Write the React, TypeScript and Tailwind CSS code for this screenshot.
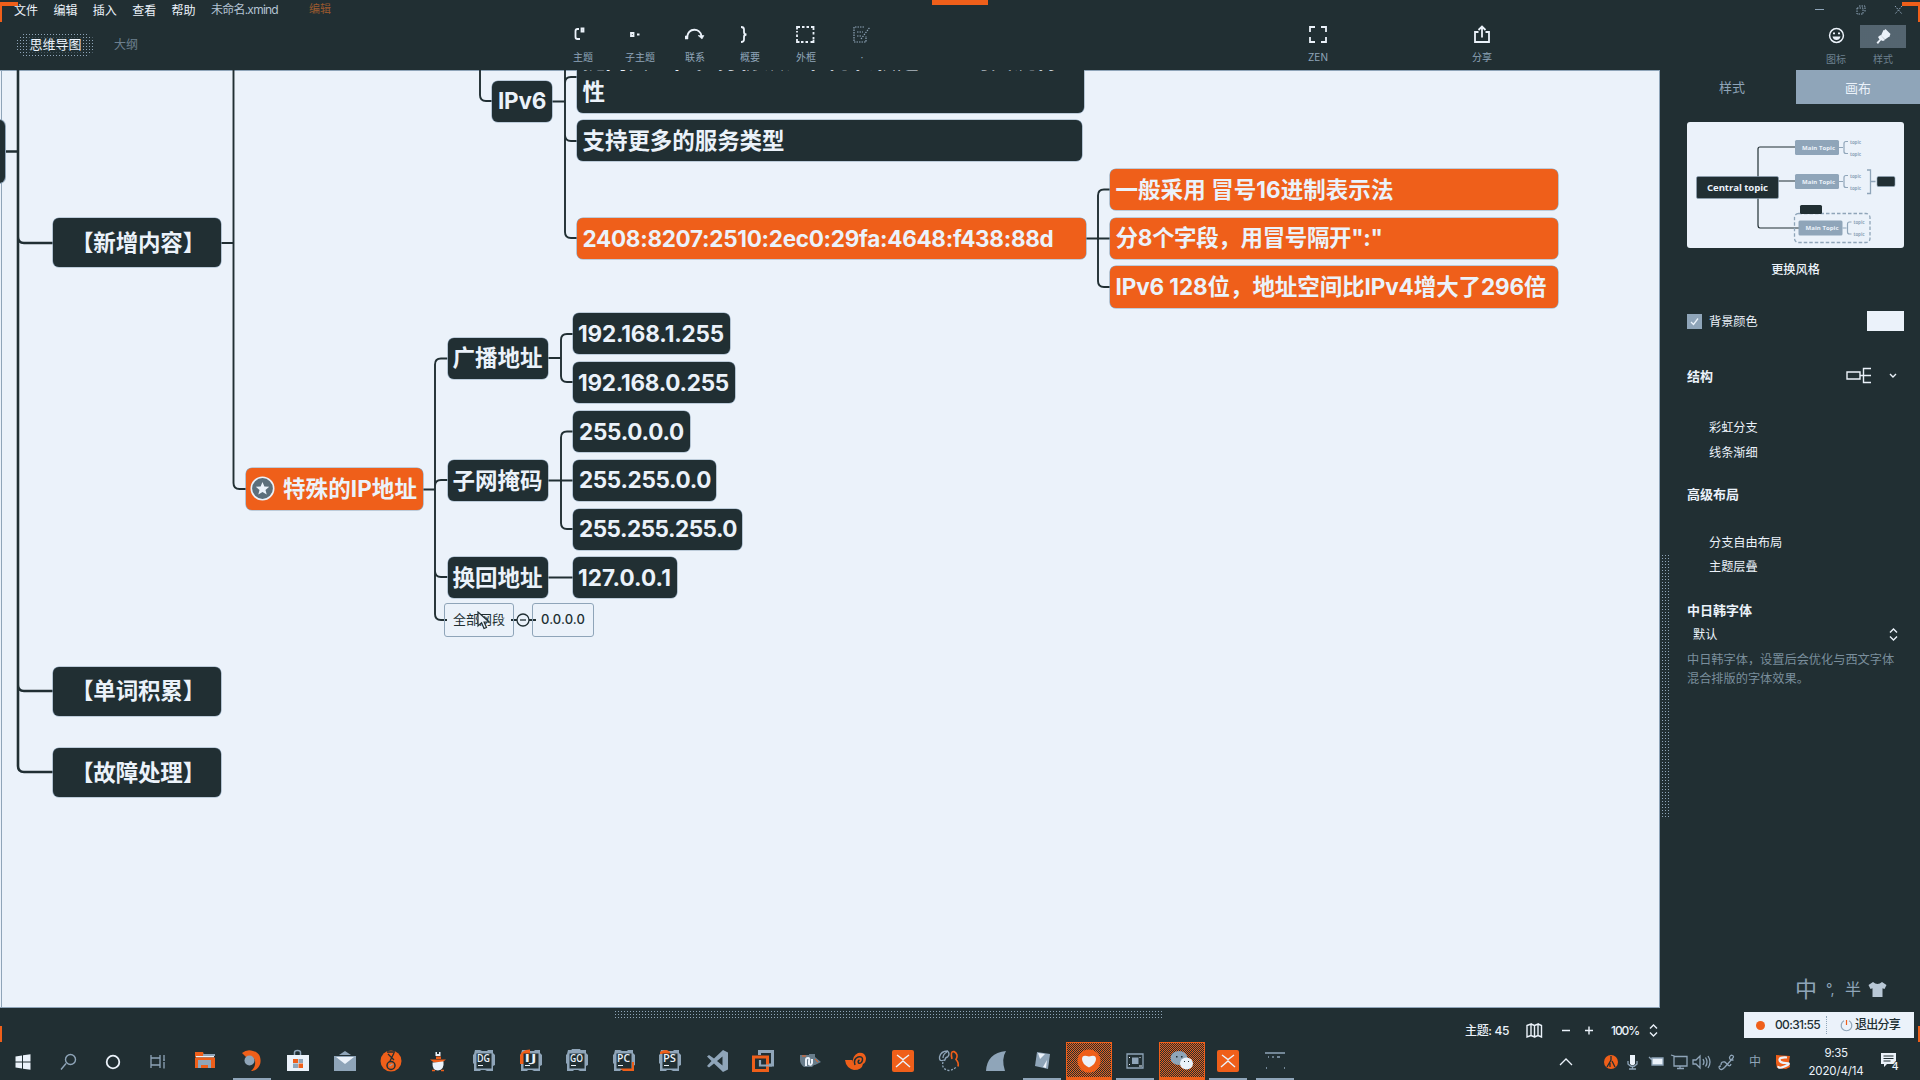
import { useLayoutEffect, useRef, useState, type ReactNode } from "react";

/** Text whose tracking is tuned so that it fills the given width. */
function Fit({ text, w, className = "" }: { text: string; w: number; className?: string }) {
  const ref = useRef<HTMLSpanElement>(null);
  const [gap, setGap] = useState(0);
  useLayoutEffect(() => {
    const el = ref.current;
    if (!el) return;
    el.style.letterSpacing = "0px";
    setGap((w - el.getBoundingClientRect().width) / text.length);
    el.style.letterSpacing = "";
  }, [text, w]);
  return (
    <span ref={ref} className={"inline-block whitespace-nowrap " + className} style={{ letterSpacing: gap + "px" }}>
      {text}
    </span>
  );
}

type TopicData = {
  x: number;
  y: number;
  w: number;
  h: number;
  text: string;
  tw: number;
  pad: number;
  orange?: boolean;
  star?: boolean;
};

const topics: TopicData[] = [
  { x: 53, y: 218, w: 168, h: 49, text: "【新增内容】", tw: 134, pad: 18 },
  { x: 53, y: 666.5, w: 168, h: 49, text: "【单词积累】", tw: 134, pad: 18 },
  { x: 53, y: 748, w: 168, h: 49, text: "【故障处理】", tw: 134, pad: 18 },
  { x: 492, y: 80.5, w: 60, h: 41, text: "IPv6", tw: 48, pad: 6 },
  { x: 577, y: 120, w: 505, h: 41, text: "支持更多的服务类型", tw: 202, pad: 5.5 },
  { x: 577, y: 218, w: 509, h: 41, text: "2408:8207:2510:2ec0:29fa:4648:f438:88d", tw: 471, pad: 5.5, orange: true },
  { x: 1110, y: 169, w: 448, h: 41, text: "一般采用 冒号16进制表示法", tw: 278, pad: 5.5, orange: true },
  { x: 1110, y: 217.5, w: 448, h: 41, text: '分8个字段，用冒号隔开":"', tw: 267, pad: 5.5, orange: true },
  { x: 1110, y: 266, w: 448, h: 41.5, text: "IPv6 128位，地址空间比IPv4增大了296倍", tw: 431, pad: 5.5, orange: true },
  { x: 246, y: 468, w: 177, h: 41.5, text: "特殊的IP地址", tw: 134, pad: 37, orange: true, star: true },
  { x: 447.5, y: 337.5, w: 100.5, h: 41, text: "广播地址", tw: 90, pad: 5 },
  { x: 447.5, y: 460, w: 100.5, h: 41, text: "子网掩码", tw: 90, pad: 5 },
  { x: 447.5, y: 557, w: 100.5, h: 41, text: "换回地址", tw: 90, pad: 5 },
  { x: 573, y: 313, w: 157, h: 41, text: "192.168.1.255", tw: 146, pad: 5 },
  { x: 573, y: 362, w: 162, h: 41, text: "192.168.0.255", tw: 151, pad: 5 },
  { x: 573, y: 411, w: 117, h: 41, text: "255.0.0.0", tw: 105, pad: 6 },
  { x: 573, y: 459.5, w: 143, h: 41, text: "255.255.0.0", tw: 132, pad: 6 },
  { x: 573, y: 508.5, w: 169, h: 41, text: "255.255.255.0", tw: 158, pad: 6 },
  { x: 573, y: 557, w: 104, h: 41, text: "127.0.0.1", tw: 93, pad: 5 },
];

function Topic({ t }: { t: TopicData }) {
  return (
    <div
      className={
        "absolute flex items-center rounded-[6px] pt-px text-[22.5px] leading-none font-bold text-[#ebf2fa] shadow-[0_0_0_0.6px_#8fa5b9] " +
        (t.orange ? "bg-[#ef5f1a]" : "bg-[#212f33]")
      }
      style={{ left: t.x, top: t.y - 70, width: t.w, height: t.h, paddingLeft: t.pad }}
    >
      {t.star && (
        <svg className="absolute left-1 top-2" width="25" height="25" viewBox="0 0 25 25">
          <circle cx="12.5" cy="12.5" r="11.2" fill="#5c6f7b" stroke="#ebf2fa" strokeWidth="1.6" />
          <path d="M12.5 6l1.9 4.4 4.8.4-3.7 3.1 1.2 4.7-4.2-2.6-4.2 2.6 1.2-4.7-3.7-3.1 4.8-.4z" fill="#ebf2fa" />
        </svg>
      )}
      <Fit text={t.text} w={t.tw} />
    </div>
  );
}

function Canvas() {
  return (
    <div className="relative h-[938px] w-[1660px] shrink-0 overflow-hidden border-b border-[#8fa5b9] bg-[#ebf2fa]">
      <svg className="absolute left-0 top-0" width="1660" height="938" viewBox="0 70 1660 938" fill="none" stroke="#212f33">
        <path d="M1.5 70V1008M1659.5 70V1008M0 70.500H1660" stroke="#8fa5b9" strokeWidth="1" />
        <path strokeWidth="2.6" d="M0 151.5H18M18 70V766q0 6 6 6H53M18 237q0 6 6 6H53M18 685q0 6 6 6H53" />
        <path
          strokeWidth="1.9"
          d="M221 243H233.5M233.5 70V483q0 6 6 6H246M480 70V95q0 6 6 6H492M552 101.5H565M565 70V232q0 6 6 6H577M565 83q0-6 6-6H577M565 135q0 6 6 6H577
          M1086 238.500H1110M1110 189.500H1104q-6 0-6 6V281q0 6 6 6H1110
          M423 489.500H435M447.500 358.500H441q-6 0-6 6V614q0 6 6 6H447M435 486q0-6 6-6H447.500M435 571q0 6 6 6H447.500
          M548 358H561M573 334H567q-6 0-6 6V376q0 6 6 6H573
          M548 480.500H573M573 431.500H567q-6 0-6 6V523q0 6 6 6H573M548 577.500H573M511 620H536"
        />
        <circle cx="523" cy="620" r="6" fill="#ebf2fa" strokeWidth="1.3" />
        <path d="M520 620H526" strokeWidth="1.3" />
      </svg>
      <div className="absolute -left-3 top-[50px] h-[63px] w-[17px] rounded-md bg-[#212f33] shadow-[0_0_0_1px_#8fa5b9]" />
      <div className="absolute -top-[28px] left-[577px] h-[70.5px] w-[507px] rounded-[6px] bg-[#212f33] pl-[5.5px] pt-[2px] text-[22.5px] font-bold leading-[32px] text-[#ebf2fa] shadow-[0_0_0_0.6px_#8fa5b9]">
        <Fit text="提高安全性。身份认证和隐私权是IPv6的关键特" w={475} className="block" />
        <div>性</div>
      </div>
      {topics.map((t) => (
        <Topic key={t.text} t={t} />
      ))}
      <div className="absolute left-[444px] top-[532.5px] flex h-[34px] w-[70px] items-center justify-center rounded-[3px] border-[1.5px] border-[#8fa5b9] pt-px text-[13px] text-[#212f33]">
        全部网段
      </div>
      <div className="absolute left-[532px] top-[532.5px] flex h-[34px] w-[62px] items-center justify-center rounded-[3px] border-[1.5px] border-[#8fa5b9] pt-px text-[13px] font-medium text-[#212f33]">
        <Fit text="0.0.0.0" w={44} />
      </div>
      <svg className="absolute left-[477px] top-[541px]" width="14" height="20" viewBox="0 0 14 20">
        <path d="M1 1v14l3.600-3.200 2.400 5.700 2.500-1-2.400-5.500h5z" fill="#ebf2fa" stroke="#212f33" strokeWidth="1.200" />
      </svg>
    </div>
  );
}

const tools: { label: string; w: number; dim?: boolean; icon: ReactNode }[] = [
  { label: "主题", w: 58, icon: <path d="M6 4H4.500q-2 0-2 2v6q0 2 2 2H7M8.500 3.500h2v3h-2z" /> },
  { label: "子主题", w: 56, icon: <path d="M1 8h2.500v3H1zM7 9.500h2.500" /> },
  {
    label: "联系",
    w: 54,
    icon: (
      <>
        <path d="M2 12C3.500 2.500 15 2.500 16.500 11" />
        <path d="M0 11h3v3H0zM13 10.500h6l-2 3.500z" fill="currentColor" strokeWidth="0.500" />
      </>
    ),
  },
  { label: "概要", w: 56, icon: <path d="M1 2q3 0 3 2.500v2.500q0 2.500 2.500 2.500Q4 9.500 4 12v2.500q0 2.500-3 2.500" /> },
  {
    label: "外框",
    w: 56,
    icon: <path d="M1 4.500V2h3M6 2h2.500M10.500 2H13M15 2h2.500v3M17.500 7v2.500M17.500 12v2.500M17.500 15v2h-3M12 17H9.500M7.500 17H5M3.500 17H1v-3M1 12V9.500M1 7.500V6" />,
  },
  {
    label: "·",
    w: 56,
    dim: true,
    icon: <path strokeWidth="1.200" strokeDasharray="1.500 1" d="M12 2H2v15h12v-6M5 7h6M5 11h4M9 14l9-12" />,
  },
];

function ToolButton({ label, w, dim, icon }: { label: string; w: number; dim?: boolean; icon: ReactNode }) {
  return (
    <div className="flex shrink-0 flex-col items-center pt-[5px]" style={{ width: w }}>
      <svg width="20" height="20" viewBox="0 0 20 20" fill="none" stroke="currentColor" strokeWidth="1.800" className={dim ? "text-[#8fa5b9]" : "text-[#ebf2fa]"}>
        {icon}
      </svg>
      <span className="mt-1 whitespace-nowrap text-[10px] leading-[16px] text-[#8fa5b9]">{label}</span>
    </div>
  );
}

function Header() {
  return (
    <header className="relative h-[70px] shrink-0 overflow-hidden">
      <div className="flex h-5 items-center pl-[14px] text-[12px] leading-none text-[#ebf2fa]">
        {["文件", "编辑", "插入", "查看", "帮助"].map((m) => (
          <span key={m} className="w-[39.400px] pt-px">
            {m}
          </span>
        ))}
        <span className="w-[98px] text-[#b4c4d3]">
          <Fit text="未命名.xmind" w={67} />
        </span>
        <span className="pb-0.5 text-[11px] text-[#99592f]">编辑</span>
        <svg className="ml-auto mr-4 text-[#8fa5b9]" width="92" height="12" viewBox="0 0 92 12" fill="none" stroke="currentColor">
          <path d="M3 5.500h9" />
          <path d="M45 4h6v6h-6zM47 2h6v6" strokeDasharray="1.500 1" />
          <path d="M83 2l7 8M90 2l-7 8" strokeDasharray="1.500 1" />
        </svg>
      </div>
      <div className="flex h-[50px]">
        <div className="ml-4 mt-[13px] flex h-6 w-[79px] items-center justify-center rounded-full bg-[radial-gradient(#8fa5b9_0.6px,transparent_0.9px)] bg-[length:3px_3px] text-[13px]">
          <span className="rounded bg-[#212f33]/70 text-[#ebf2fa]">思维导图</span>
        </div>
        <div className="ml-[19px] mt-[17px] w-[440px] text-[12px] leading-4 text-[#6d808f]">大纲</div>
        {tools.map((t) => (
          <ToolButton key={t.label} {...t} />
        ))}
        <div className="ml-[400px] flex">
          <ToolButton label="ZEN" w={56} icon={<path d="M2 7V2h5M13 2h5v5M18 12v5h-5M7 17H2v-5" />} />
          <div className="ml-[108px]">
            <ToolButton label="分享" w={56} icon={<path d="M6.500 7H3v10h14V7h-3.500M10 12.500V2M6.500 5L10 1.500 13.500 5" />} />
          </div>
        </div>
        <div className="ml-auto flex text-[10px] text-[#6d808f]">
          <div className="flex w-12 flex-col items-center pt-[7px]">
            <svg width="17" height="17" viewBox="0 0 17 17">
              <circle cx="8.500" cy="8.500" r="6.900" fill="none" stroke="#ebf2fa" strokeWidth="1.500" />
              <path d="M4.500 9.500h8q-.8 3.500-4 3.500t-4-3.500zM5 5.500h2v1.800H5zM10 5.500h2v1.800h-2z" fill="#ebf2fa" />
            </svg>
            <span className="mt-[7px] leading-4">图标</span>
          </div>
          <div className="mr-[14px] flex flex-col items-center pt-[5px]">
            <div className="flex h-[23px] w-[46px] items-center justify-center bg-[#3a494f] bg-[radial-gradient(#8fa5b9_0.5px,transparent_0.8px)] bg-[length:2px_2px]">
              <svg width="17" height="17" viewBox="0 0 17 17" fill="#ebf2fa">
                <path d="M8.500 2L15 8l-5 3.500L6 7.500zM5.500 7L10 12l-2 1-2-.8L3 16l-1.500-1.500 3-3L3 9z" />
                <path d="M10.500 1l5 5-1.500 3-5.500-6z" />
              </svg>
            </div>
            <span className="mt-[3px] leading-4">样式</span>
          </div>
        </div>
      </div>
      <div className="absolute left-0 top-[2px] h-5 w-[18px] border-l-2 border-t-4 border-[#ef5f1a]" />
      <div className="absolute right-0 top-[2px] h-5 w-[18px] border-r-2 border-t-4 border-[#ef5f1a]" />
      <div className="absolute left-[932px] top-0 h-[5px] w-14 bg-[#ef5f1a]" />
    </header>
  );
}

function Preview() {
  return (
    <svg className="block h-[126px] w-[217px] rounded-[3px] bg-[#ebf2fa]" viewBox="0 0 217 126" fill="none" fontFamily='"Open Sans", sans-serif' fontWeight="700">
      <path d="M108 25H73q-2 0-2 2V103q0 3 2 3H112M91 59H108" stroke="#212f33" strokeWidth="1.200" />
      <rect x="9.500" y="54.500" width="82" height="22" rx="1.500" fill="#212f33" stroke="#8fa5b9" strokeWidth="0.600" />
      <text x="20" y="69" fontSize="9.600" fill="#ebf2fa" textLength="61">Central topic</text>
      <rect x="107.500" y="91.500" width="75.500" height="29" rx="4" stroke="#8fa5b9" strokeDasharray="3.500 2" strokeWidth="1.300" />
      <rect x="113" y="83" width="22" height="9" rx="1.500" fill="#212f33" />
      {[
        [108, 18],
        [108, 52],
        [111.5, 98.5],
      ].map(([x, y]) => (
        <g key={y}>
          <rect x={x} y={y} width="44" height="15" rx="1.500" fill="#8fa5b9" />
          <text x={x + 7} y={y + 9.5} fontSize="6" fill="#ebf2fa" textLength="33">Main Topic</text>
          <path d={`M${x + 44} ${y + 7.5}h4M${x + 53} ${y + 1.5}h-2q-2 0-2 2v8q0 2 2 2h2`} stroke="#8fa5b9" strokeWidth="1.200" />
          <text x={x + 55} y={y + 3.5} fontSize="4.500" fill="#8fa5b9" textLength="11">topic</text>
          <text x={x + 55} y={y + 15.5} fontSize="4.500" fill="#8fa5b9" textLength="11">topic</text>
        </g>
      ))}
      <path d="M180 48h3.500v23.500H180M183.500 59.500h5" stroke="#8fa5b9" strokeWidth="1.300" />
      <rect x="190" y="54.500" width="18" height="10" rx="1.500" fill="#212f33" stroke="#8fa5b9" strokeWidth="0.600" />
    </svg>
  );
}

function Sidebar() {
  return (
    <aside className="flex w-[248px] flex-col text-[12.200px] leading-4 text-[#ebf2fa]">
      <div className="flex h-[34px] text-[13px]">
        <div className="flex flex-1 items-center justify-center pr-1 text-[#8fa5b9]">样式</div>
        <div className="flex w-[124px] items-center justify-center bg-[#8fa5b9] pt-px text-[#ebf2fa]">画布</div>
      </div>
      <div className="mt-[18px] flex h-[126px] pl-[15px]">
        <Preview />
      </div>
      <div className="mt-[14px] pr-px text-center font-medium">更换风格</div>
      <div className="flex flex-col pl-[15px] pr-4">
        <div className="mt-[33px] flex h-5 items-center">
          <div className="flex size-[15px] items-center justify-center bg-[#8fa5b9]">
            <svg width="9" height="9" viewBox="0 0 9 9" fill="none" stroke="#ebf2fa" strokeWidth="1.300">
              <path d="M1 5l2.500 2.500L8 1.500" />
            </svg>
          </div>
          <span className="ml-[7px] pt-[2px]">背景颜色</span>
          <div className="ml-auto h-5 w-[37px] bg-[#ebf2fa]" />
        </div>
        <div className="mt-[33px] flex h-6 items-center">
          <span className="text-[13px] font-bold">结构</span>
          <svg className="ml-auto mr-[6px]" width="60" height="18" viewBox="0 0 60 18" fill="none" stroke="#ebf2fa" strokeWidth="1.400">
            <path d="M9 5h13v7H9zM22 8.500h11M33 1.500h-7.500v14H33" />
            <path d="M52 7l3 3 3-3" />
          </svg>
        </div>
        <div className="mt-[32px] pl-[22px]">彩虹分支</div>
        <div className="mt-[8.500px] pl-[22px]">线条渐细</div>
        <div className="mt-[25.500px] text-[13px] font-bold">高级布局</div>
        <div className="mt-[32.500px] pl-[22px]">分支自由布局</div>
        <div className="mt-[8.500px] pl-[22px]">主题层叠</div>
        <div className="mt-[26.500px] text-[13px] font-bold">中日韩字体</div>
        <div className="mt-[9px] flex items-center justify-between pl-[6px] pr-[6px]">
          默认
          <svg width="9" height="13" viewBox="0 0 9 13" fill="none" stroke="#ebf2fa" strokeWidth="1.400">
            <path d="M1 4.500l3.500-3.500L8 4.500M1 8.500L4.500 12 8 8.500" />
          </svg>
        </div>
        <p className="mt-[8.500px] whitespace-nowrap text-[12.200px] leading-[18.500px] text-[#7a8e9c]">
          中日韩字体，设置后会优化与西文字体
          <br />
          混合排版的字体效果。
        </p>
      </div>
      <div className="mb-[5px] mt-auto flex h-7 items-center pl-[123px] text-[#8fa5b9]">
        <span className="w-[31px] text-[22px]">中</span>
        <span className="w-[19px] text-[14px]">°,</span>
        <span className="w-[23px] text-[16px]">半</span>
        <svg width="19" height="17" viewBox="0 0 19 17" fill="#b9c8d6">
          <path d="M5 1q4.500 4 9 0l4.500 3-2 4-2-.800V16h-10V7.200L2.500 8 .500 4z" />
        </svg>
      </div>
    </aside>
  );
}

function StatusBar() {
  return (
    <div className="relative flex h-[34px] shrink-0 items-center">
      <div className="absolute left-[614px] top-[2px] h-2 w-[548px] bg-[radial-gradient(#8fa5b9_0.7px,transparent_0.9px)] bg-[length:3px_3px]" />
      <div className="absolute left-0 top-[18px] h-4 w-[2px] bg-[#ef5f1a]" />
      <div className="absolute right-0 top-[18px] h-4 w-[2px] bg-[#ef5f1a]" />
      <div className="ml-[1465px] mt-[11px] flex items-center text-[12px] font-medium text-[#ebf2fa]">
        <span className="w-[61px]">
          <Fit text="主题: 45" w={44} />
        </span>
        <svg width="67" height="15" viewBox="0 0 67 15" fill="none" stroke="currentColor" strokeWidth="1.400">
          <path d="M1 2.500l4-1.500v11.500L1 14zM5 1l3.500 1.500V14L5 12.500M8.500 2.500L12 1v11.500L8.500 14M12 1l3.500 1.500V14L12 12.500" />
          <path d="M36 7.500h8M59 7.500h8M63 3.500v8" />
        </svg>
        <span className="ml-[18px] w-[37px] whitespace-nowrap">
          <Fit text="100%" w={28} />
        </span>
        <svg width="11" height="15" viewBox="0 0 11 15" fill="none" stroke="currentColor" strokeWidth="1.400">
          <path d="M2 5.500L5.500 2 9 5.500M2 9.500L5.500 13 9 9.500" />
        </svg>
      </div>
      <div className="ml-auto mr-[6px] flex h-[26px] w-[170px] items-center bg-[#ebf2fa] text-[12px] font-medium text-[#212f33]">
        <span className="ml-[12px] size-[9px] rounded-full bg-[#ef5f1a]" />
        <span className="ml-[10px]">
          <Fit text="00:31:55" w={45} />
        </span>
        <span className="ml-[6px] h-[18px] border-l border-dotted border-[#8fa5b9]" />
        <svg className="ml-[13px]" width="13" height="13" viewBox="0 0 13 13" fill="none" strokeWidth="1.200">
          <path d="M4 1.800a5.300 5.300 0 1 0 5 0" stroke="#8fa5b9" />
          <path d="M6.500 1v5" stroke="#ef5f1a" />
        </svg>
        <span className="ml-[2px]">
          <Fit text="退出分享" w={45} />
        </span>
      </div>
    </div>
  );
}

const G = "#8fa5b9";
const O = "#ef5f1a";
const L = "#ebf2fa";
const D = "#212f33";

const Ide = ({ name, children }: { name: string; children?: ReactNode }) => (
  <>
    <path d="M3 1h5l2 1h5l1-1h5v3l2 2v10l-2 1v5h-6l-2-1H9l-1 1H2v-7L1 14V6l1-1z" fill={G} />
    {children}
    <rect x="4.500" y="4.500" width="15" height="15" fill={D} />
    <text x="5" y="13" fontSize="10" fontWeight="600" fill={L} textLength="13" lengthAdjust="spacingAndGlyphs">
      {name}
    </text>
    <path d="M6 16.500h5" stroke={L} strokeWidth="1" />
  </>
);

const XMind = () => (
  <>
    <rect x="1" y="1" width="22" height="22" rx="2" fill={O} />
    <path d="M6 6l6 4.500L18 6M5 18l7-6 7 6" stroke={L} strokeWidth="1.400" fill="none" />
  </>
);

const apps: { icon: ReactNode; state?: "line" | "hot" }[] = [
  {
    icon: (
      <>
        <path d="M2 3h8l1 2.500h10V8H2z" fill={O} />
        <path d="M10 5h12v2H10z" fill={G} />
        <path d="M3 7h18v1.500H3z" fill={L} />
        <path d="M2 8.500h20V19H2z" fill={O} />
        <path d="M5 11h13v8h-3v-3H8v3H5z" fill={G} />
      </>
    ),
  },
  {
    state: "line",
    icon: (
      <>
        <path d="M2 4q5-4 11-2c6 1 8 6 7.500 11S16 22 11 22q5-4 4-10T6 8z" fill={O} />
        <circle cx="9.500" cy="11.500" r="5" fill={G} />
      </>
    ),
  },
  {
    icon: (
      <>
        <path d="M8.500 6V3.500q0-2 3-2t3 2V6" stroke={G} strokeWidth="1.500" fill="none" />
        <path d="M1 6h22v16H1z" fill={L} />
        <path d="M7 10h5v4H7z" fill={O} />
        <path d="M12.500 10H17v4h-4.500zM7 14.500h5V19H7z" fill={G} />
        <path d="M12.500 14.500H17V19h-4.500z" fill={O} />
      </>
    ),
  },
  {
    icon: (
      <>
        <path d="M6 6l6-4 6 4z" fill={G} />
        <path d="M1 7h22v15H1z" fill={G} />
        <path d="M3 8h18l-9 7z" fill={L} />
      </>
    ),
  },
  {
    icon: (
      <>
        <circle cx="12" cy="12" r="10.500" fill={O} />
        <path d="M8 3h8M9 5l6 6M15 4l-4 8" stroke={D} strokeWidth="1.300" />
        <circle cx="12" cy="16.500" r="4" fill="none" stroke={D} strokeWidth="1.500" />
        <path d="M10.500 17l3-2" stroke={G} strokeWidth="1.200" />
      </>
    ),
  },
  {
    icon: (
      <>
        <path d="M9.500 3h1.500v2h2V3h1.500v4h-5z" fill={L} />
        <path d="M10 7.500h5V10h-5zM4 10.500h16l-4 3H8z" fill={O} />
        <path d="M6.500 13.500l2 0 8-1h1q1 8.500-5.500 9Q6 21.500 6.500 13.500z" fill={L} />
        <path d="M6 21.500h3M15 21.500h3" stroke={O} strokeWidth="1.500" />
      </>
    ),
  },
  { icon: <Ide name="DG" /> },
  { icon: <Ide name="IJ"><path d="M1 7q1-6 10-6.500V5H5v10H1z" fill={O} /></Ide> },
  { icon: <Ide name="GO"><path d="M7 0h8l2 3H5z" fill={G} /></Ide> },
  { icon: <Ide name="PC"><path d="M8 19h12v-6h2v9H11z" fill={O} /></Ide> },
  { icon: <Ide name="PS"><path d="M2 3q6-4 10 0v2H2z" fill={O} /></Ide> },
  {
    icon: <path fillRule="evenodd" d="M18 1l5 2.500v17L18 23 9 14.500l-5 4-2-1.500 4.500-5L2 7.500 4 6l5 3.500zM17.500 7.500L12 12l5.500 4.500z" fill={G} />,
  },
  {
    icon: (
      <>
        <path d="M8.500 6V2.500h13v13.500H18" fill="none" stroke={G} strokeWidth="3" />
        <path d="M2.500 8h14v13.500h-14z" fill="none" stroke={O} strokeWidth="3" />
        <path d="M9 11v5.500h7M9 16.500h12" fill="none" stroke={G} strokeWidth="2.200" />
      </>
    ),
  },
  {
    icon: (
      <>
        <path d="M2 6h9v-1h6v3l6 5-6 3h-1l-2 2H6q-4-3-4-7z" fill="#697d8b" />
        <path d="M8 17v-6q0-2 2-2t1 3v3q2 2 3-1v-4" fill="none" stroke={L} strokeWidth="2" />
        <path d="M4 7h4M17 10l3 3" stroke={O} />
      </>
    ),
  },
  {
    icon: (
      <>
        <path d="M1 11h7q1 0 1 3-1-7 5-10 7-1 8 5 0 5-3 6-1 6-9 6Q2 19 1 11z" fill={O} />
        <path d="M11 16q-2-6 3-8 5-1 4.500 3-1 4-4 3-1-2 1-3" fill="none" stroke={D} strokeWidth="1.500" />
      </>
    ),
  },
  { icon: <XMind /> },
  {
    icon: (
      <>
        <path d="M9 10q-7 4-6.500-2Q4 2 10.500 2q3 3 0 6-2 0-3 4M6 9q0-4 4-6" fill="none" stroke={G} strokeWidth="1.300" />
        <path d="M15 10q-2-8 2-7.500 5 3 2 8 3 3 2 7" fill="none" stroke={O} strokeWidth="1.600" />
        <path d="M6 13q-2 7 6 8.500 6-1 7-4" fill="none" stroke={G} strokeWidth="1.300" strokeDasharray="2 1.500" />
      </>
    ),
  },
  { icon: <path d="M2 22Q3 4 22 2q-5 8-1 20z" fill={G} /> },
  {
    state: "line",
    icon: (
      <>
        <path d="M7 3l13 2-2 15-13-3z" fill={G} />
        <path d="M8 4l7 1-5 5zM17 11l-1 8-3-1z" fill={L} />
      </>
    ),
  },
  {
    state: "hot",
    icon: (
      <>
        <circle cx="12" cy="12" r="11.500" fill={O} />
        <path d="M12 7.500q7-2.500 7 2.500 0 5-7 8.500-7-3.500-7-8.500 0-5 7-2.500z" fill={L} />
      </>
    ),
  },
  {
    state: "line",
    icon: (
      <>
        <path d="M4 5h16v14H4z" fill="none" stroke={G} strokeWidth="1.300" />
        <path d="M9 8.500h6.500V15H9z" fill={G} />
        <path d="M6.500 8v1M6.500 15v1M17 8v1M16 17h3" stroke={L} />
      </>
    ),
  },
  {
    state: "hot",
    icon: (
      <>
        <ellipse cx="9" cy="9" rx="8.500" ry="7" fill={G} />
        <path d="M6 7h1.500v1.500H6zM11 7h1.500v1.500H11z" fill={D} />
        <ellipse cx="16.500" cy="14.500" rx="6.500" ry="6" fill={L} />
        <path d="M14 12.500h1M18 12.500h1" stroke={D} strokeWidth="1" />
      </>
    ),
  },
  { state: "line", icon: <XMind /> },
  {
    state: "line",
    icon: <path d="M2 4h20M5 8h1M10 7v2M14 8h3M3 19h1M21 19h1" stroke={G} strokeWidth="1.300" />,
  },
];

function Taskbar() {
  return (
    <footer className="flex h-[38px] shrink-0">
      <div className="flex w-[182px] items-center pt-px">
        {[
          <path key="w" d="M4.500 6.500L11 5.500V11.500H4.500zM12 5.300l7.500-1V11.500H12zM4.500 12.500H11v6L4.500 17.500zM12 12.500h7.500v7.200l-7.500-1z" fill={L} />,
          <path key="s" d="M5 19.500l5-6M9.500 9.500a5 5 0 1 0 10 0a5 5 0 1 0-10 0" stroke={G} strokeWidth="1.400" fill="none" />,
          <circle key="c" cx="12" cy="12" r="6.300" stroke={L} strokeWidth="1.800" fill="none" />,
          <path key="t" d="M5 5v3h9V5M5 18v-3h9v3M5 8v7M14 8v7M18 5v4M18 12v6.500M17 10h2" stroke={G} strokeWidth="1.300" fill="none" />,
        ].map((p, i) => (
          <div key={i} className="flex w-[45px] justify-center">
            <svg width="24" height="24" viewBox="0 0 24 24">
              {p}
            </svg>
          </div>
        ))}
      </div>
      {apps.map((a, i) => (
        <div key={i} className="flex w-[46.500px] flex-col items-center">
          <div
            className={
              a.state === "hot"
                ? "flex h-9 w-[46px] items-center justify-center border border-[#ef5f1a] bg-[repeating-conic-gradient(#ef5f1a_0_25%,#212f33_0_50%)] bg-[length:2px_2px] pt-px"
                : "flex h-9 w-[46px] items-center justify-center pt-[2px]"
            }
          >
            <svg width="24" height="24" viewBox="0 0 24 24" fontFamily='"Open Sans", sans-serif'>
              {a.icon}
            </svg>
          </div>
          {a.state && <div className={a.state === "hot" ? "h-0.5 w-[46px] bg-[#ef5f1a]" : "h-0.5 w-[38px] bg-[#8fa5b9]"} />}
        </div>
      ))}
      <div className="ml-auto flex items-center pt-px text-[#8fa5b9]">
        <svg width="185" height="24" viewBox="0 0 185 24" fill="none" stroke="currentColor" strokeWidth="1.300">
          <path d="M2 15l6-6 6 6" stroke={L} />
          <circle cx="53" cy="12" r="7" fill={O} stroke="none" />
          <path d="M53 6v4l-4 7M54 11l3 6M52 13v4" stroke={D} />
          <path d="M72 5h5v9q-2.500 2.500-5 0z" fill={L} stroke="none" />
          <path d="M70 11v3q4.500 5 9 0v-3M74.500 16v3M71 19h7" />
          <path d="M94 8h11v7H94zM91 7l3 3" fill={L} />
          <path d="M116 6.500h13V16h-13zM122 16v2.500M119 18.500h7M113 5l3 1v5" />
          <path d="M135 10h3l4-4v12l-4-4h-3zM145 9q2 3 0 6M147.500 7.500q3 4.500 0 9M150 6q4 6 0 12" />
          <path d="M163 16q-3 0-1.500 2.500t5-1l8-9q2-2 0-3t-3 2q0 3 4 2.500M163 15q0-4 4-3l3 3q2 2 3-1" />
        </svg>
        <span className="flex h-6 w-6 items-center justify-center text-[12px]">中</span>
        <svg className="ml-[8px]" width="16" height="16" viewBox="0 0 16 16">
          <path d="M1 1l14 1-1 6 1 5-4 2-9-1L1 9z" fill={O} />
          <path d="M12 3.500Q4 3 4.500 6T11 9t-1 3.200T3.500 12" stroke={L} strokeWidth="2.200" fill="none" />
        </svg>
        <div className="ml-[16px] flex w-[58px] flex-col items-center text-[11.500px] leading-[18px] text-[#ebf2fa]">
          <Fit text="9:35" w={23} />
          <Fit text="2020/4/14" w={55} />
        </div>
        <svg className="ml-[15px] mr-[18px]" width="22" height="22" viewBox="0 0 22 22" fontFamily='"Open Sans", sans-serif'>
          <path d="M1 2h15v11H7l-3 3v-3H1z" fill={L} />
          <path d="M3.500 5h10M3.500 7.500h10M3.500 10h7" stroke={D} />
          <text x="12" y="18.500" fontSize="11" fontWeight="600" fill={L} stroke={D} strokeWidth="1.500" paintOrder="stroke">
            4
          </text>
        </svg>
      </div>
    </footer>
  );
}

export default function App() {
  return (
    <div className="flex h-[1080px] w-[1920px] flex-col overflow-hidden bg-[#212f33] font-[Inter,'Noto_Sans_CJK_SC',sans-serif]">
      <Header />
      <main className="flex h-[938px] shrink-0">
        <Canvas />
        <div className="w-3 pl-px pt-[484px]">
          <div className="h-[264px] w-2 bg-[radial-gradient(#8fa5b9_0.7px,transparent_0.9px)] bg-[length:3px_3px]" />
        </div>
        <Sidebar />
      </main>
      <StatusBar />
      <Taskbar />
    </div>
  );
}
